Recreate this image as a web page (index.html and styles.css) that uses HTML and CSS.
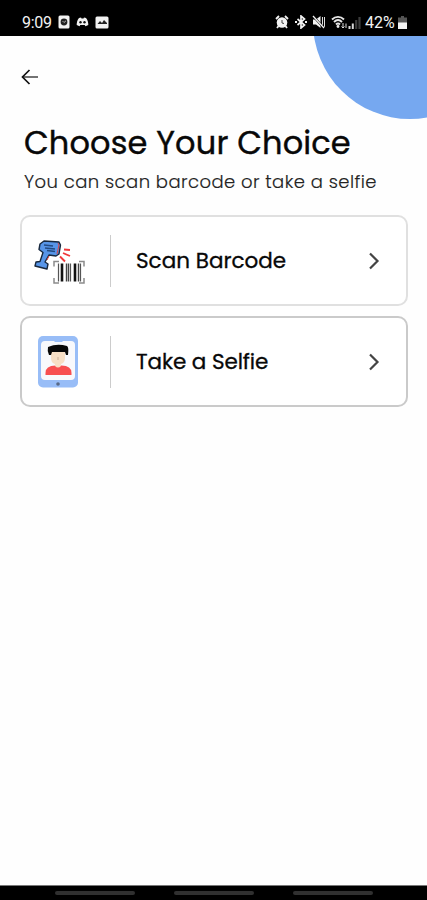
FILE: index.html
```html
<!DOCTYPE html>
<html lang="en">
<head>
    <meta charset="UTF-8">
    <meta name="viewport" content="width=device-width, initial-scale=1.0">
    <title>Choose Your Choice</title>
    <link rel="stylesheet" href="styles.css">
</head>
<body>

<div class="status-bar">
    <div class="status-left">
        <span class="time">9:09</span>
        <svg width="12" height="14" viewBox="0 0 12 14">
            <rect x="0.5" y="0.5" width="11" height="13" rx="1.5" fill="#f2f2f2"/>
            <circle cx="6" cy="7" r="3.4" fill="#222"/>
            <path d="M4.5 6l1.5 1.5L8 5.8" stroke="#aaa" fill="none"/>
        </svg>
        <svg class="discord" width="13" height="10" viewBox="0 0 13 10">
            <path d="M3 1l2-.5.5 1h2l.5-1 2 .5c1.600 2 2.400 4.500 2.300 7L9.500 9.200 8.700 8H4.300L3.500 9.200.700 8C.600 5.500 1.400 3 3 1z" fill="#f2f2f2"/>
            <circle cx="4.500" cy="5.300" r="1.200" fill="#111"/>
            <circle cx="8.500" cy="5.300" r="1.200" fill="#111"/>
        </svg>
        <svg width="14" height="13" viewBox="0 0 14 13">
            <rect x="0.5" y="0.5" width="13" height="12" rx="1.5" fill="#f2f2f2"/>
            <path d="M2.500 8l2.500-3 2 2 2-3 3 3v1z" fill="#222"/>
        </svg>
    </div>
    <div class="status-right">
        <!-- alarm -->
        <svg width="14" height="14" viewBox="0 0 14 14">
            <circle cx="7" cy="7.500" r="5.300" fill="#f2f2f2"/>
            <path d="M1 4l3-3M13 4l-3-3M3.500 11L2 13M10.500 11l1.500 2" stroke="#f2f2f2" stroke-width="1.800"/>
            <path d="M7 5v3l2 .500" stroke="#444" stroke-width="1" fill="none"/>
        </svg>
        <!-- bluetooth -->
        <svg class="bluetooth" width="12" height="14" viewBox="0 0 12 14">
            <path d="M2.500 4l7 6L6 13V1l3.500 3-7 6" stroke="#f2f2f2" stroke-width="1.700" fill="none"/>
            <path d="M0 7h2M10 7h2" stroke="#f2f2f2" stroke-width="1.800"/>
        </svg>
        <!-- muted -->
        <svg class="mute" width="14" height="14" viewBox="0 0 14 14">
            <path d="M1 4.500h3L8.500 1v12L4 9.500H1z" fill="#f2f2f2"/>
            <path d="M10.500 2v10M12.500 2v10" stroke="#ddd" stroke-width="1"/>
            <path d="M1 1l11 12" stroke="#000" stroke-width="2.200"/>
            <path d="M1 1l11 12" stroke="#f2f2f2" stroke-width="1.300"/>
        </svg>
        <!-- wifi -->
        <svg class="wifi" width="17" height="14" viewBox="0 0 17 14">
            <path d="M1 4.500C4.500 1 9.500 1 13 4.500M3 7c2.500-2.500 5.500-2.500 8 0M5 9.500c1.300-1.300 2.700-1.300 4 0" stroke="#e6e6e6" stroke-width="1.900" fill="none"/>
            <circle cx="7" cy="11.500" r="1.400" fill="#eee"/>
            <path d="M12 8v5M10.500 11.500L12 13l1.500-1.500M15 13V8.500" stroke="#ddd" fill="none"/>
        </svg>
        <!-- signal -->
        <svg class="signal" width="13" height="13" viewBox="0 0 13 13">
            <path d="M1.500 10v3M4.800 7.500V13" stroke="#d8d8d8" stroke-width="2"/>
            <path d="M8.200 4v9M11.500 1v12" stroke="#3c3c3c" stroke-width="2.200"/>
        </svg>
        <span class="percent">42%</span>
        <svg width="9" height="13" viewBox="0 0 9 13">
            <path d="M3 0h3v1.500h3V7H0V1.500h3z" fill="#555"/>
            <path d="M0 6.500h9V13H0z" fill="#f2f2f2"/>
        </svg>
    </div>
</div>

<main class="screen">
    <div class="circle"></div>

    <button class="back" aria-label="Back">
        <svg width="18" height="16" viewBox="0 0 18 16">
            <path d="M1.500 8H17" stroke="#444" stroke-width="1.500"/>
            <path d="M8.500 1L1.500 8l7 7" stroke="#111" stroke-width="1.700" fill="none"/>
        </svg>
    </button>

    <h1>Choose Your Choice</h1>
    <p class="subtitle">You can scan barcode or take a selfie</p>

    <div class="choices">
        <button class="choice">
            <span class="picture">
                <svg width="52" height="52" viewBox="0 0 52 52">
                    <!-- scanner gun -->
                    <path d="M6 9l4-3 15 1 1.500 3-1.500 9-3 2-7-1-4 7 3 2-1 5-12-3 1-4 4-.500 3-9-4-3z" fill="#5795e8" stroke="#18283d" stroke-width="1.400" stroke-linejoin="round"/>
                    <path d="M10 10l9 1M11 13l10 1M13 15.500l8 1" stroke="#244b82" stroke-width="1.600"/>
                    <path d="M24 8l1 2-2 9M15 21l-2 4" stroke="#d44" stroke-width="1" fill="none"/>
                    <!-- rays -->
                    <path d="M30 14.500l6 .500M29 18l7 3M26 21.500l5 5" stroke="#f0393b" stroke-width="1.900"/>
                    <!-- barcode -->
                    <path d="M25 26.500h-5v5M45 26.500h5v5M20 43v5h5M50 43v5h-5" stroke="#8c8c8c" stroke-width="1.500" fill="none"/>
                    <path d="M24.500 28.500v18M36.500 28.500v18M46.500 28.500v18" stroke="#555" stroke-width="1.200"/>
                    <path d="M28 28.500v18M41 28.500v18" stroke="#111" stroke-width="2.600"/>
                    <path d="M32.500 28.500v18M34.500 28.500v18M44.500 28.500v18" stroke="#444" stroke-width="1.400"/>
                </svg>
            </span>
            <span class="label">Scan Barcode</span>
            <svg width="12" height="18" viewBox="0 0 12 18">
                <path d="M2 1.500L9.500 9 2 16.500" stroke="#444" stroke-width="2.200" fill="none"/>
            </svg>
        </button>

        <button class="choice selfie">
            <span class="picture">
                <svg width="40" height="52" viewBox="0 0 40 52">
                    <rect width="40" height="51.500" rx="5" fill="#98bdf7"/>
                    <path d="M7 5h9l1 1h7l1-1h8q4 0 4 4v31q0 4-4 4H7q-4 0-4-4V9q0-4 4-4z" fill="#f8f9fc"/>
                    <path d="M7.500 39v-2q0-7.500 10-7.500h6q10 0 10 7.500v2z" fill="#f84f50"/>
                    <path d="M13 15q7-3 14 0v7q0 5-4 6v2q-3 3-6 0v-2q-4-1-4-6z" fill="#f8dfc5"/>
                    <path d="M10 11q9-4 19-1 2 1 1 9h-2l-1-3H14l-1 3h-2q-2-4-1-8z" fill="#080808"/>
                    <path d="M20 21v3" stroke="#cbb098"/>
                    <circle cx="20" cy="48" r="1.800" fill="#596a87"/>
                </svg>
            </span>
            <span class="label">Take a Selfie</span>
            <svg width="12" height="18" viewBox="0 0 12 18">
                <path d="M2 1.500L9.500 9 2 16.500" stroke="#444" stroke-width="2.200" fill="none"/>
            </svg>
        </button>
    </div>
</main>

<div class="nav-bar">
    <span></span>
    <span></span>
    <span></span>
</div>

</body>
</html>
```
FILE: styles.css
```css
* {
    box-sizing: border-box;
}

body {
    display: flex;
    flex-direction: column;
    height: 100vh;
    margin: 0;
    background-color: #fefefe;
    color: #080808;
    font-family: Poppins, Inter, sans-serif;
}

svg {
    display: block;
    flex-shrink: 0;
}

.status-bar {
    display: flex;
    justify-content: space-between;
    height: 36px;
    padding: 8px 20px 0 22px;
    background-color: #000;
    color: #f2f2f2;
    font-family: Roboto, sans-serif;
    font-size: 16px;
}

.status-left,
.status-right {
    display: flex;
    align-items: center;
    height: 28px;
}

.time {
    width: 30px;
    margin-right: 6px;
    letter-spacing: -0.3px;
}

.discord {
    margin: 0 6px;
}

.bluetooth {
    margin: 0 5px 0 6px;
}

.wifi {
    margin-left: 5px;
}

.signal {
    margin-right: 4px;
}

.percent {
    width: 33px;
}

.screen {
    position: relative;
    flex: 1;
    padding: 33px 19px 0 20px;
    overflow: hidden;
}

.circle {
    position: absolute;
    top: -111px;
    left: 313px;
    width: 194px;
    height: 194px;
    border-radius: 50%;
    background-color: #76a8f0;
}

button {
    padding: 0;
    border: none;
    background: none;
    color: inherit;
    font-family: inherit;
    cursor: pointer;
}

.back {
    display: block;
    margin-left: 1px;
}

h1 {
    margin: 38px 0 0 4px;
    font-size: 32px;
    font-weight: 400;
    line-height: 40px;
    letter-spacing: 0.15px;
    white-space: nowrap;
    -webkit-text-stroke: 0.4px #080808;
}

.subtitle {
    margin: 6px 0 0 4px;
    color: #222;
    font-size: 18px;
    font-weight: 300;
    line-height: 26px;
    letter-spacing: 0.43px;
    white-space: nowrap;
    -webkit-text-stroke: 0.15px #222;
}

.choices {
    display: flex;
    flex-direction: column;
    gap: 10px;
    margin-top: 20px;
}

.choice {
    display: flex;
    align-items: center;
    height: 91px;
    padding-right: 26px;
    border: 2px solid #e0e0e0;
    border-radius: 10px;
    background-color: #fff;
}

.choice.selfie {
    border-color: #cacaca;
}

.picture {
    display: flex;
    align-items: center;
    width: 89px;
    height: 52px;
    padding-left: 12px;
    border-right: 1px solid #ccc;
}

.selfie .picture {
    padding-left: 16px;
}

.label {
    flex: 1;
    margin-left: 25px;
    font-size: 21.5px;
    font-weight: 400;
    text-align: left;
    white-space: nowrap;
    -webkit-text-stroke: 0.3px #080808;
}

.selfie .label {
    letter-spacing: -0.1px;
}

.nav-bar {
    display: flex;
    justify-content: center;
    gap: 39px;
    height: 15px;
    padding-top: 5px;
    border-top: 1px solid #777;
    background-color: #000;
}

.nav-bar span {
    width: 80px;
    height: 4px;
    border-radius: 2px;
    background-color: #303030;
}
```
